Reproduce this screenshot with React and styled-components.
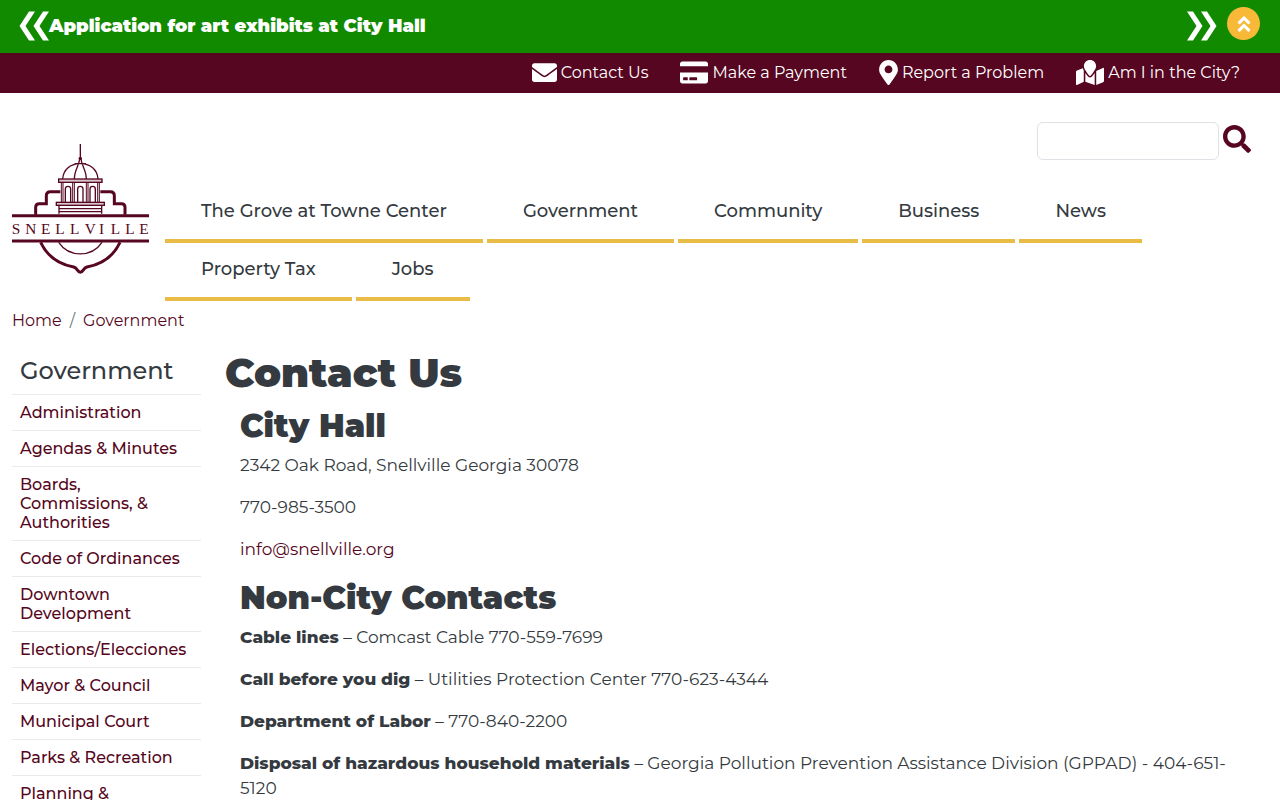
import React from 'react';
import styled, { createGlobalStyle } from 'styled-components';
import {
  FaEnvelope,
  FaCreditCard,
  FaMapMarkerAlt,
  FaMapMarked,
  FaAngleDoubleUp,
  FaSearch,
} from 'react-icons/fa';

const GlobalStyle = createGlobalStyle`
  * {
    box-sizing: border-box;
  }

  body {
    margin: 0;
    background: #fff;
    color: #343a40;
    font-family: Montserrat, Inter, sans-serif;
    font-size: 16px;
    line-height: 25px;
  }

  a {
    color: #560620;
    text-decoration: none;
  }
`;

const Alert = styled.section`
  display: flex;
  align-items: center;
  height: 53px;
  padding: 0 20px 0 19px;
  background: #118a00;
`;

const AlertLink = styled.a`
  flex: 1;
  color: #fff;
  font-size: 18px;
  font-weight: 900;
`;

const ArrowButton = styled.button`
  display: flex;
  padding: 0 0 2px;
  border: none;
  background: none;
  color: #fff;
  cursor: pointer;
`;

const CollapseButton = styled.button`
  display: flex;
  align-items: center;
  justify-content: center;
  width: 33px;
  height: 33px;
  margin: 0 0 6px 10px;
  padding: 0;
  border: none;
  border-radius: 50%;
  background: #f9b938;
  color: #fff;
  font-size: 20px;
  cursor: pointer;
`;

const TopBar = styled.nav`
  display: flex;
  justify-content: flex-end;
  gap: 32px;
  height: 40px;
  padding: 0 40px 2px;
  background: #560620;
`;

const TopLink = styled.a`
  display: flex;
  align-items: center;
  gap: 4px;
  color: #fff;

  svg {
    width: ${(props) => props.$iconWidth}px;
    height: 25px;
  }
`;

const Header = styled.header`
  display: grid;
  grid-template-columns: 137px 1fr;
  gap: 16px;
  padding: 29px 12px 0;
`;

const LogoLink = styled.a`
  margin-top: 22px;

  svg {
    display: block;
    width: 100%;
  }
`;

const SearchForm = styled.form`
  display: flex;
  align-items: center;
  justify-content: flex-end;
  gap: 4px;
  margin-bottom: 29px;
  padding-right: 17px;
`;

const SearchInput = styled.input`
  width: 182px;
  height: 38px;
  padding: 6px 12px;
  border: 1px solid #dee2e6;
  border-radius: 6px;
  font: inherit;
`;

const SearchButton = styled.button`
  display: flex;
  padding: 0 0 4px;
  border: none;
  background: none;
  color: #560620;
  font-size: 28px;
  cursor: pointer;
`;

const MainNav = styled.nav`
  display: flex;
  flex-wrap: wrap;
  gap: 4px;
`;

const NavLink = styled.a`
  padding: 9px 36px 15px;
  border-bottom: 4px solid #e9bb47;
  color: #343a40;
  font-size: 18px;
  font-weight: 500;
  line-height: 26px;
`;

const Breadcrumb = styled.nav`
  display: flex;
  gap: 8px;
  padding: 7px 12px 0;

  span {
    color: #6c757d;
  }
`;

const Content = styled.div`
  display: grid;
  grid-template-columns: 189px 1fr;
  gap: 24px;
  padding: 16px 12px 0;
`;

const SideTitle = styled.h2`
  margin: 0;
  padding: 8px 8px 9px;
  font-size: 24px;
  font-weight: 500;
  line-height: 28px;
`;

const SideLink = styled.a`
  display: block;
  padding: 8px;
  border-top: 1px solid #e9eaeb;
  font-weight: 500;
  line-height: 19px;
`;

const Title = styled.h1`
  margin: 0 0 10px;
  font-size: 40px;
  font-weight: 900;
  line-height: 48px;
`;

const Article = styled.div`
  padding: 0 15px;
`;

const SectionTitle = styled.h2`
  margin: 0 0 8px;
  font-size: 32px;
  font-weight: 900;
  line-height: 38px;
`;

const Text = styled.p`
  margin: 0 0 17px;
  font-size: 17px;

  b {
    font-weight: 800;
  }
`;

const topLinks = [
  { text: 'Contact Us', icon: <FaEnvelope />, iconWidth: 25 },
  { text: 'Make a Payment', icon: <FaCreditCard />, iconWidth: 28 },
  { text: 'Report a Problem', icon: <FaMapMarkerAlt />, iconWidth: 19 },
  { text: 'Am I in the City?', icon: <FaMapMarked />, iconWidth: 28 },
];

const navLinks = [
  'The Grove at Towne Center',
  'Government',
  'Community',
  'Business',
  'News',
  'Property Tax',
  'Jobs',
];

const sideLinks = [
  'Administration',
  'Agendas & Minutes',
  'Boards, Commissions, & Authorities',
  'Code of Ordinances',
  'Downtown Development',
  'Elections/Elecciones',
  'Mayor & Council',
  'Municipal Court',
  'Parks & Recreation',
  'Planning & Development',
];

const contacts = [
  { name: 'Cable lines', info: 'Comcast Cable 770-559-7699' },
  { name: 'Call before you dig', info: 'Utilities Protection Center 770-623-4344' },
  { name: 'Department of Labor', info: '770-840-2200' },
  {
    name: 'Disposal of hazardous household materials',
    info: 'Georgia Pollution Prevention Assistance Division (GPPAD) - 404-651-5120',
  },
];

const PrevIcon = () => (
  <svg width="30" height="30" viewBox="0 0 30 30" fill="currentColor" aria-hidden="true">
    <path d="M10 0.500h6L6.500 15 16 29.500h-6L0.500 15zM24 0.500h6L20.500 15 30 29.500h-6L14.500 15z" />
  </svg>
);

const NextIcon = () => (
  <svg width="30" height="30" viewBox="0 0 30 30" fill="currentColor" aria-hidden="true">
    <path d="M0 0.500h6L15.500 15 6 29.500H0L9.500 15zM14 0.500h6L29.500 15 20 29.500h-6L23.500 15z" />
  </svg>
);

const Logo = () => (
  <svg viewBox="36 42 411 390" fill="none" stroke="#560620" strokeWidth="4" role="img" aria-label="Snellville">
    <path d="M241 42v40" />
    <circle cx="241" cy="85" r="5" fill="#560620" stroke="none" />
    <path d="M188 147C190 118 212 102 238 101h6C270 102 292 118 294 147M239 86C238 106 223 120 223 147M243 86C244 106 259 120 259 147M224 101h34" strokeWidth="4" />
    <rect x="176" y="147" width="130" height="10" fill="#d9c6cc" />
    <path d="M184 158v58M298 158v58M189 158v58M293 158v58M218 158v58M223 158v58M259 158v58M264 158v58" strokeWidth="3" />
    <path d="M196 216v-39a8 8 0 0 1 16 0v39M233 216v-39a8 8 0 0 1 16 0v39M270 216v-39a8 8 0 0 1 16 0v39" strokeWidth="4" />
    <rect x="169" y="217" width="144" height="9" fill="#d9c6cc" />
    <path d="M177 227v24M305 227v24M177 236h128M177 245h128" strokeWidth="4" />
    <path d="M107 254v-22q0-11 11-11h21v-24q0-12 12-12h30M375 254v-22q0-11-11-11h-21v-24q0-12-12-12h-30" strokeWidth="9" />
    <path d="M36 257h411M36 333h411" strokeWidth="9" />
    <path d="M122 337C141 377 176 403 221 411q7 2 10 8 10 15 20 0 3-6 10-8C306 403 341 377 360 337" strokeWidth="9" />
    <path d="M176 337c31 46 99 46 130 0" strokeWidth="4" />
    <text
      x="35 76 123 166 210 254 297 332 376 418"
      y="311"
      fill="#560620"
      stroke="none"
      fontFamily="Liberation Serif, serif"
      fontSize="46"
    >
      SNELLVILLE
    </text>
  </svg>
);

const App = () => {
  return (
    <>
      <GlobalStyle />
      <Alert>
        <ArrowButton type="button" aria-label="Previous alert"><PrevIcon /></ArrowButton>
        <AlertLink href="#">Application for art exhibits at City Hall</AlertLink>
        <ArrowButton type="button" aria-label="Next alert"><NextIcon /></ArrowButton>
        <CollapseButton type="button" aria-label="Collapse alerts"><FaAngleDoubleUp /></CollapseButton>
      </Alert>
      <TopBar>
        {topLinks.map(({ text, icon, iconWidth }) => (
          <TopLink key={text} href="#" $iconWidth={iconWidth}>{icon}{text}</TopLink>
        ))}
      </TopBar>
      <Header>
        <LogoLink href="#"><Logo /></LogoLink>
        <div>
          <SearchForm>
            <SearchInput type="search" aria-label="Search" />
            <SearchButton type="button" aria-label="Submit search"><FaSearch /></SearchButton>
          </SearchForm>
          <MainNav>
            {navLinks.map((text) => <NavLink key={text} href="#">{text}</NavLink>)}
          </MainNav>
        </div>
      </Header>
      <Breadcrumb aria-label="Breadcrumb">
        <a href="#">Home</a>
        <span>/</span>
        <a href="#">Government</a>
      </Breadcrumb>
      <Content>
        <aside>
          <SideTitle>Government</SideTitle>
          {sideLinks.map((text) => <SideLink key={text} href="#">{text}</SideLink>)}
        </aside>
        <main>
          <Title>Contact Us</Title>
          <Article>
            <SectionTitle>City Hall</SectionTitle>
            <Text>2342 Oak Road, Snellville Georgia 30078</Text>
            <Text>770-985-3500</Text>
            <Text><a href="#">info@snellville.org</a></Text>
            <SectionTitle>Non-City Contacts</SectionTitle>
            {contacts.map(({ name, info }) => (
              <Text key={name}><b>{name}</b> – {info}</Text>
            ))}
          </Article>
        </main>
      </Content>
    </>
  );
};

export default App;
